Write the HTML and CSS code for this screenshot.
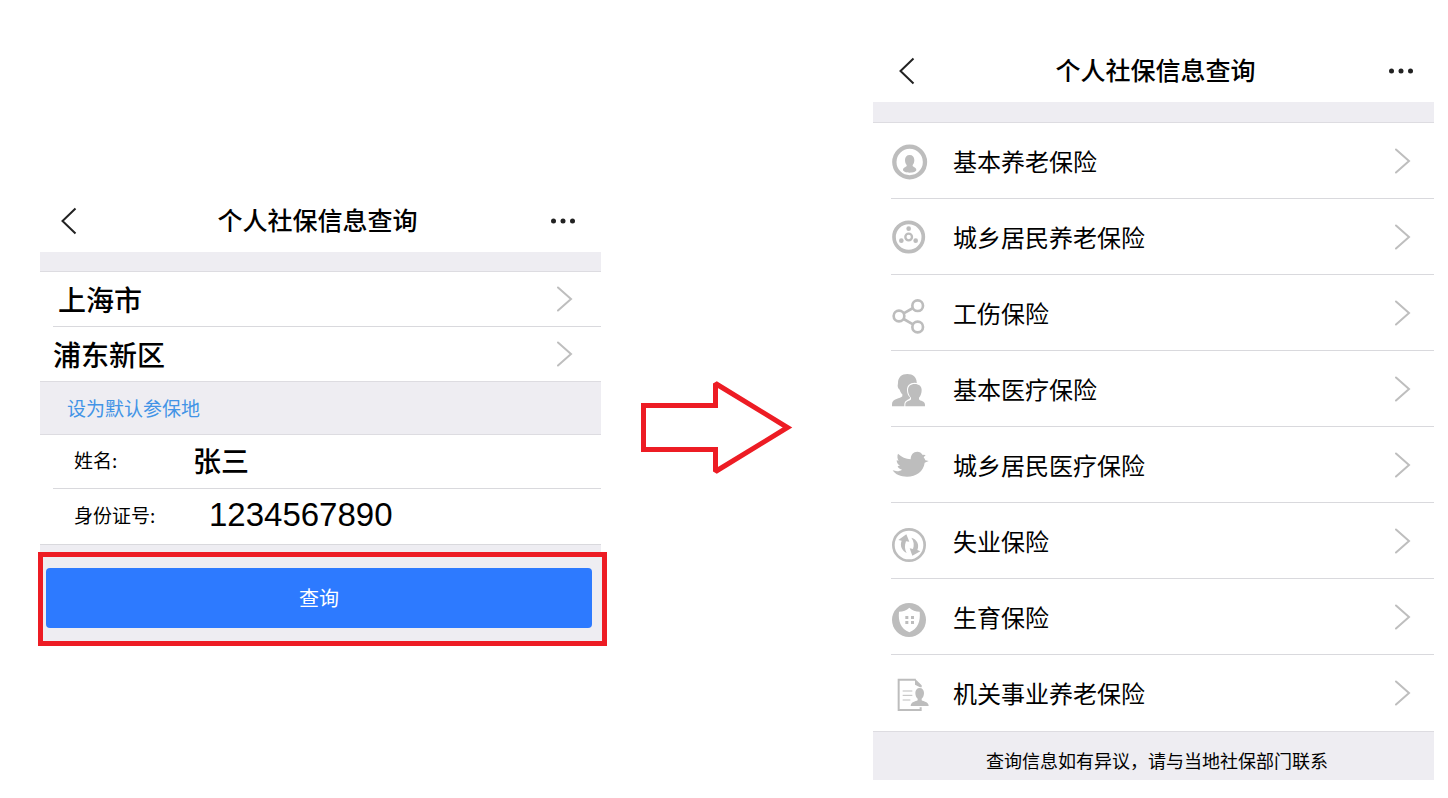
FILE: index.html
```html
<!DOCTYPE html>
<html lang="zh-CN">
<head>
<meta charset="utf-8">
<meta name="viewport" content="width=device-width, initial-scale=1">
<title>个人社保信息查询</title>
<link rel="stylesheet" href="styles.css">
</head>
<body>
<main class="steps">
  <section class="screen screen-form">
    <header class="bar bar-form">
      <button class="bar-btn" type="button" aria-label="返回"><svg width="24" height="28" viewBox="0 0 24 28"><path class="back" d="M15.5 1.5 2.5 14l13 12.500"/></svg></button>
      <h1 class="title">个人社保信息查询</h1>
      <button class="bar-btn" type="button" aria-label="更多"><svg width="24" height="28" viewBox="0 0 24 28"><g class="dots"><circle cx="2.5" cy="14" r="2.5"/><circle cx="12" cy="14" r="2.5"/><circle cx="21.5" cy="14" r="2.5"/></g></svg></button>
    </header>
    <div class="band"></div>
    <form class="form">
      <div class="group">
        <button class="pick pick-city" type="button"><span>上海市</span><svg class="chev" width="16" height="26" viewBox="0 0 16 26"><path d="M1 1.500l13 11.500L1 24.500"/></svg></button>
        <button class="pick" type="button"><span>浦东新区</span><svg class="chev" width="16" height="26" viewBox="0 0 16 26"><path d="M1 1.500l13 11.500L1 24.500"/></svg></button>
      </div>
      <div class="default"><a class="default-link" href="#">设为默认参保地</a></div>
      <div class="group">
        <div class="field"><label class="label" for="name">姓名:</label><input class="value" id="name" type="text" value="张三"></div>
        <div class="field"><label class="label" for="idno">身份证号:</label><input class="value value-number" id="idno" type="text" value="1234567890"></div>
      </div>
      <div class="spacer"></div>
      <div class="submit-area"><button class="submit" type="button">查询</button></div>
    </form>
  </section>

  <svg class="arrow" width="149" height="93" viewBox="0 0 149 93" aria-hidden="true"><path d="M2.5 24.500h72V2.500l72 44-72 44v-22h-72z"/></svg>

  <section class="screen">
    <header class="bar bar-list">
      <button class="bar-btn" type="button" aria-label="返回"><svg width="24" height="28" viewBox="0 0 24 28"><path class="back" d="M15.5 1.5 2.5 14l13 12.500"/></svg></button>
      <h1 class="title">个人社保信息查询</h1>
      <button class="bar-btn" type="button" aria-label="更多"><svg width="24" height="28" viewBox="0 0 24 28"><g class="dots"><circle cx="2.5" cy="14" r="2.5"/><circle cx="12" cy="14" r="2.5"/><circle cx="21.5" cy="14" r="2.5"/></g></svg></button>
    </header>
    <div class="band"></div>
    <ul class="list">
      <li><a class="item" href="#">
        <svg class="icon" viewBox="33 32 120 120"><circle class="line" cx="89" cy="95" r="46" stroke-width="13"/><path d="M89 74c-9 0-14 6-14 15 0 7 2 12 5 15v3c-3 4-11 4-11 12 0 5 10 8 20 8s20-3 20-8c0-8-8-8-11-12v-3c3-3 5-8 5-15 0-9-5-15-14-15z"/></svg>
        <span class="item-text">基本养老保险</span><svg class="chev" width="16" height="26" viewBox="0 0 16 26"><path d="M1 1.500l13 11.500L1 24.500"/></svg></a></li>
      <li><a class="item" href="#">
        <svg class="icon" viewBox="33 260 120 120"><circle class="line" cx="86" cy="320" r="44" stroke-width="11"/><circle class="line" cx="86" cy="320" r="10" stroke-width="7"/><circle cx="86" cy="295" r="7"/><circle cx="64" cy="331" r="7"/><circle cx="107" cy="331" r="7"/></svg>
        <span class="item-text">城乡居民养老保险</span><svg class="chev" width="16" height="26" viewBox="0 0 16 26"><path d="M1 1.500l13 11.500L1 24.500"/></svg></a></li>
      <li><a class="item" href="#">
        <svg class="icon" viewBox="33 23 120 120"><g class="line" stroke-width="8"><circle cx="57" cy="92" r="16"/><circle cx="113" cy="61" r="16"/><circle cx="113" cy="125" r="16"/><path d="M71 84l28-16M71 101l28 16"/></g></svg>
        <span class="item-text">工伤保险</span><svg class="chev" width="16" height="26" viewBox="0 0 16 26"><path d="M1 1.500l13 11.500L1 24.500"/></svg></a></li>
      <li><a class="item" href="#">
        <svg class="icon" viewBox="33 252 120 120"><path d="M82 267c-17 0-28 10-28 27l-1 8c0 5 3 10 6 12 2 6 4 10 8 14v6c-5 7-31 7-31 23v7h50l26-60-2-12c0-15-11-25-28-25z"/><path class="cutout" d="M104 293c-15 0-23 9-23 22 0 9 3 17 9 22v3c-4 5-17 6-17 19v7h64v-7c0-14-15-14-19-19v-3c6-5 9-13 9-22 0-13-8-22-23-22z"/><path d="M104 297c-12 0-20 7-20 18 0 9 4 18 9 23v5c-4 6-17 5-17 16v5h59v-5c0-11-14-10-18-16v-5c5-5 8-14 8-23 0-11-8-18-21-18z"/></svg>
        <span class="item-text">基本医疗保险</span><svg class="chev" width="16" height="26" viewBox="0 0 16 26"><path d="M1 1.500l13 11.500L1 24.500"/></svg></a></li>
      <li><a class="item" href="#">
        <svg class="icon" viewBox="33 30 120 120"><path d="M54 56c11 11 23 15 38 17 0-14 8-23 20-23 7 0 12 3 15 9l10 1-6 7c3 4 4 6 5 9l10 2-12 5c-3 26-25 42-53 42-19 0-35-6-43-19 11 4 21 3 28-2-8-2-12-6-13-11l7-1c-6-3-10-9-10-16l6 1c-4-6-5-14-2-21z"/></svg>
        <span class="item-text">城乡居民医疗保险</span><svg class="chev" width="16" height="26" viewBox="0 0 16 26"><path d="M1 1.500l13 11.500L1 24.500"/></svg></a></li>
      <li><a class="item" href="#">
        <svg class="icon" viewBox="33 258 120 120"><circle class="line" cx="87" cy="330" r="47" stroke-width="8"/><path d="M79 298l9 22-10-1c-5 13-4 24 2 35-15-8-21-22-15-37l-10-2zM94 308c17 5 25 20 18 37l9 4-24 13-8-22 10 2c4-12 3-23-5-34z"/></svg>
        <span class="item-text">失业保险</span><svg class="chev" width="16" height="26" viewBox="0 0 16 26"><path d="M1 1.500l13 11.500L1 24.500"/></svg></a></li>
      <li><a class="item" href="#">
        <svg class="icon" viewBox="33 22 120 120"><circle cx="87" cy="91" r="51"/><path class="cutout" d="M88 54c8 8 19 12 31 12 3 28-5 51-31 62-26-11-34-34-31-62 12 0 23-4 31-12z"/><path d="M76 79h9v9h-9zM93 79h9v9h-9zM76 94h9v9h-9zM93 94h9v9h-9z"/></svg>
        <span class="item-text">生育保险</span><svg class="chev" width="16" height="26" viewBox="0 0 16 26"><path d="M1 1.500l13 11.500L1 24.500"/></svg></a></li>
      <li><a class="item" href="#">
        <svg class="icon" viewBox="33 249 120 120"><path class="line" stroke-width="6" d="M122 352v8H56v-91h51"/><path d="M105 266l20 20v6h-5l-15-8z"/><path class="line" stroke-width="3" d="M68 303h29M68 316h29M68 330h23"/><path d="M119 294c-8 0-13 6-13 15 0 8 3 14 7 17v5c-6 4-21 4-21 17h54c0-13-16-13-21-17v-5c4-3 7-9 7-17 0-9-5-15-13-15z"/></svg>
        <span class="item-text">机关事业养老保险</span><svg class="chev" width="16" height="26" viewBox="0 0 16 26"><path d="M1 1.500l13 11.500L1 24.500"/></svg></a></li>
    </ul>
    <footer class="note">查询信息如有异议，请与当地社保部门联系</footer>
  </section>
</main>
</body>
</html>
```
FILE: styles.css
```css
* {
  box-sizing: border-box;
}

body {
  margin: 0;
  background: #fff;
  color: #000;
  font-family: "Noto Sans CJK SC", "Noto Sans", sans-serif;
}

button,
input {
  margin: 0;
  padding: 0;
  border: 0;
  background: none;
  color: inherit;
  font: inherit;
}

svg {
  display: block;
  flex: none;
}

.steps {
  display: flex;
  align-items: flex-start;
  padding: 40px 14px 16px 40px;
}

.screen {
  flex: 1;
  min-width: 0;
}

.screen-form {
  margin-top: 150px;
}

.arrow {
  margin: 341px 83px 0 40px;
  overflow: visible;
  fill: none;
  stroke: #ed1c24;
  stroke-width: 5;
  stroke-linejoin: miter;
  stroke-miterlimit: 2;
}

.bar {
  display: flex;
  align-items: center;
  justify-content: space-between;
  height: 62px;
}

.bar-form {
  padding: 0 26px 0 20px;
}

.bar-list {
  padding: 0 21px 0 25px;
}

.title {
  margin: 0;
  padding-bottom: 4px;
  font-size: 25px;
  font-weight: 500;
  line-height: 36px;
}

.back {
  fill: none;
  stroke: #222;
  stroke-width: 2;
}

.dots {
  fill: #222;
}

.band {
  height: 20px;
  background: #eeedf2;
  border-bottom: 1px solid #dddce1;
}

.bar-list + .band {
  height: 21px;
}

.chev {
  fill: none;
  stroke: #bebebe;
  stroke-width: 2;
  stroke-linecap: round;
}

.group {
  padding-left: 13px;
}

.pick,
.field {
  display: flex;
  align-items: center;
  width: 100%;
  height: 54px;
}

.pick {
  justify-content: space-between;
  padding-right: 28px;
  font-size: 28px;
  font-weight: 500;
  line-height: 40px;
}

.pick-city {
  height: 55px;
  padding-left: 5px;
}

.pick:first-child,
.field:first-child {
  border-bottom: 1px solid #d9d9dd;
}

.default {
  display: flex;
  align-items: center;
  height: 54px;
  padding-left: 27px;
  background: #eeedf2;
  border-top: 1px solid #dddce1;
  border-bottom: 1px solid #dddce1;
}

.default-link {
  color: #4294e6;
  font-size: 19px;
  line-height: 28px;
  text-decoration: none;
}

.field {
  padding: 0 0 3px 21px;
}

.field:last-child {
  height: 55px;
}

.label {
  width: 119px;
  font-size: 19px;
  line-height: 28px;
}

.value {
  flex: 1;
  min-width: 0;
  height: 40px;
  font-size: 28px;
  font-weight: 500;
}

.value-number {
  padding-left: 16px;
  font-family: "Liberation Sans", Arial, sans-serif;
  font-size: 33px;
  font-weight: 400;
}

.spacer {
  height: 8px;
  background: #eeedf2;
  border-top: 1px solid #d9d9dd;
}

.submit-area {
  margin: 0 -6px 0 -2px;
  padding: 11px 10px 13px 3px;
  background: #eeedf2;
  border: 5px solid #ed1c24;
}

.submit {
  display: block;
  width: 100%;
  height: 60px;
  border-radius: 4px;
  background: #2d7aff;
  color: #fff;
  font-size: 20px;
  line-height: 28px;
}

.list {
  margin: 0;
  padding: 0 0 0 18px;
  list-style: none;
}

.item {
  display: flex;
  align-items: center;
  height: 76px;
  padding-right: 23px;
  border-bottom: 1px solid #d9d9dd;
  color: inherit;
  text-decoration: none;
}

li:last-child .item {
  border-bottom-color: transparent;
}

.icon {
  width: 40px;
  height: 40px;
  margin-right: 22px;
  overflow: visible;
  fill: #bdbdbd;
}

.line {
  fill: none;
  stroke: #bdbdbd;
}

.cutout {
  fill: #fff;
}

.item-text {
  flex: 1;
  font-size: 24px;
  line-height: 36px;
}

.note {
  padding: 14px 0 6px 7px;
  background: #eeedf2;
  border-top: 1px solid #dddce1;
  font-size: 18px;
  line-height: 28px;
  text-align: center;
}
```
